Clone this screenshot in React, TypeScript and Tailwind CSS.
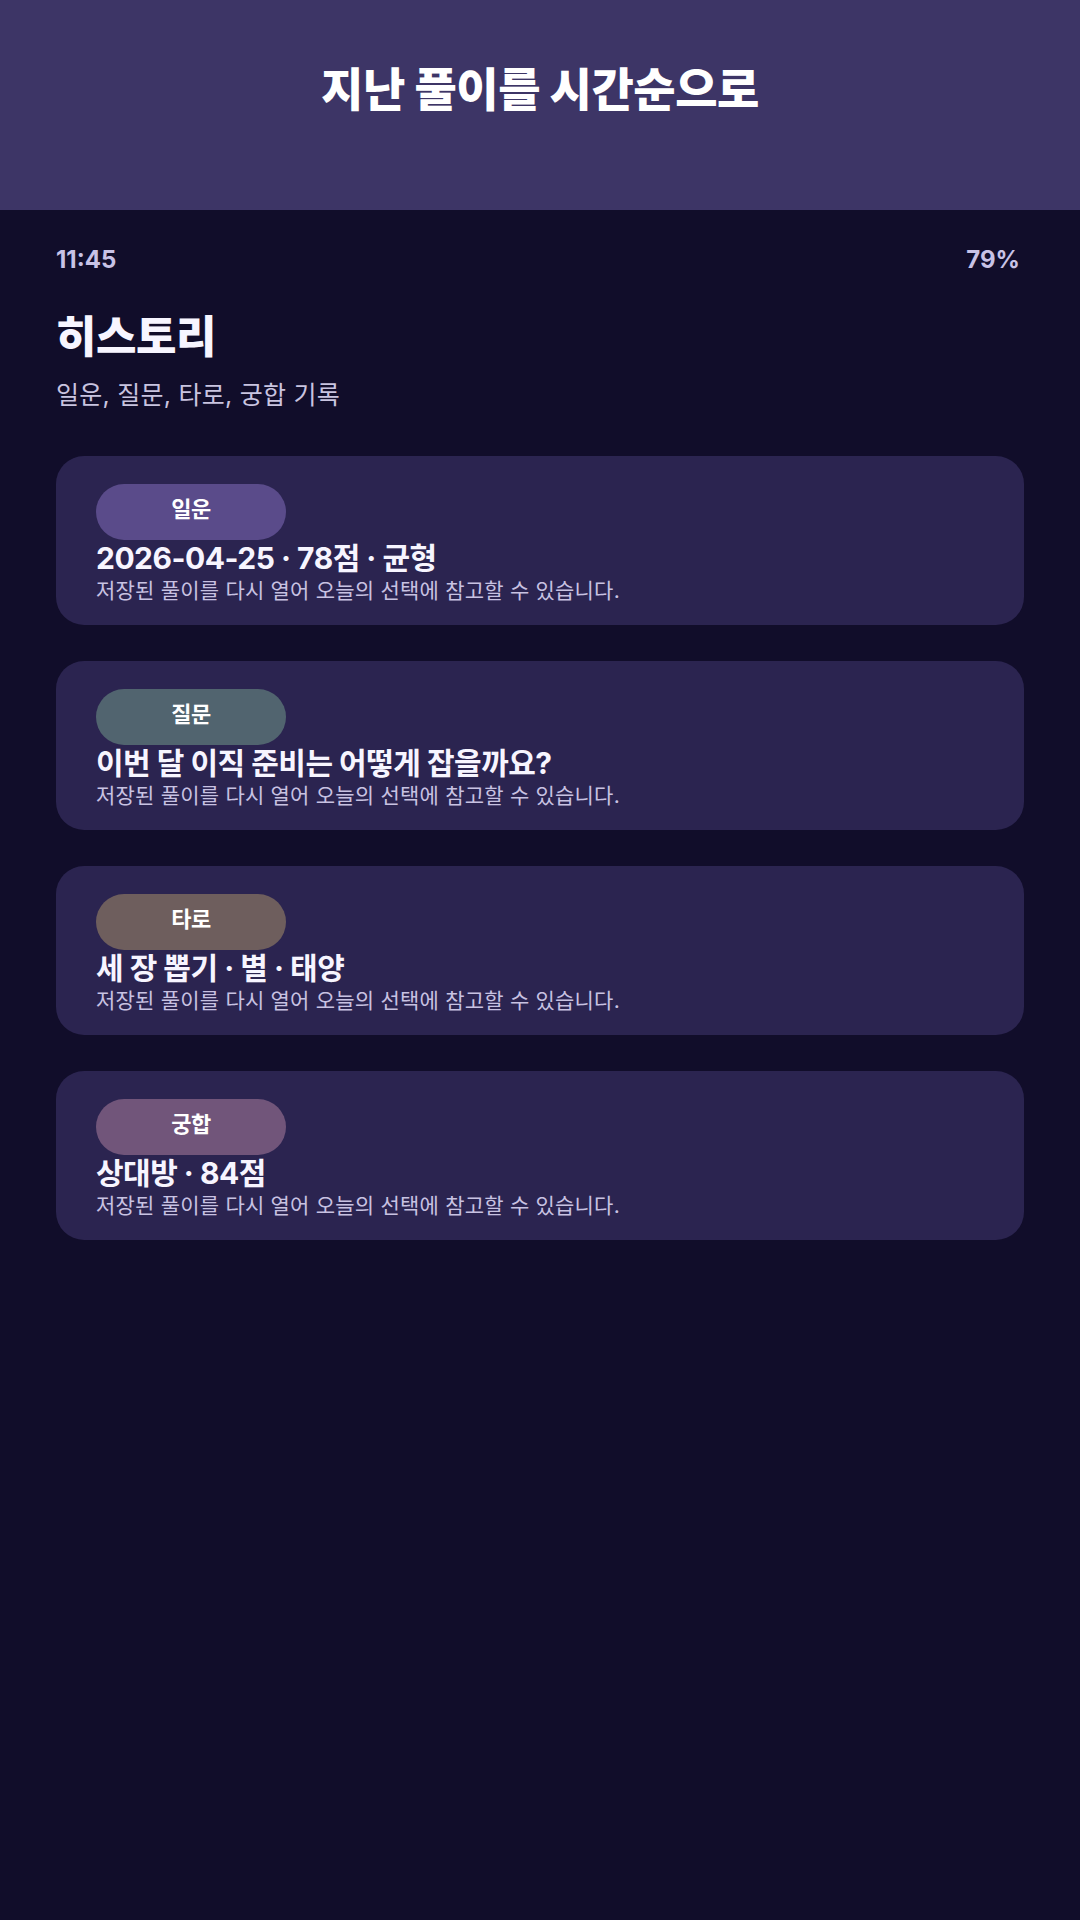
import React from 'react'

const font = { fontFamily: 'Inter, "Noto Sans CJK KR", "Noto Sans", sans-serif' }

interface Entry {
  tag: string
  title: string
  pill: string
}

const entries: Entry[] = [
  { tag: '일운', title: '2026-04-25 · 78점 · 균형', pill: 'bg-[#5a4b8a]' },
  { tag: '질문', title: '이번 달 이직 준비는 어떻게 잡을까요?', pill: 'bg-[#51646f]' },
  { tag: '타로', title: '세 장 뽑기 · 별 · 태양', pill: 'bg-[#6e5e5d]' },
  { tag: '궁합', title: '상대방 · 84점', pill: 'bg-[#71557a]' },
]

const HistoryCard: React.FC<{ entry: Entry }> = ({ entry }) => {
  return (
    <div className="flex flex-col items-start rounded-[28px] bg-[#2b2450] px-[40px] pt-[28px] pb-[20px]">
      <span
        className={`flex h-[56px] w-[190px] items-center justify-center rounded-full pb-[6px] text-[22px] font-bold tracking-[-0.02em] text-white ${entry.pill}`}
      >
        {entry.tag}
      </span>
      <span className="text-[30px] leading-[36px] font-bold tracking-[-0.017em] text-[#f7f5ff]">
        {entry.title}
      </span>
      <span className="text-[21px] leading-[29px] tracking-[0.01em] text-[#c8c2e2]">
        저장된 풀이를 다시 열어 오늘의 선택에 참고할 수 있습니다.
      </span>
    </div>
  )
}

export default function App() {
  return (
    <div className="min-h-[1920px] w-[1080px] bg-[#110d2a]" style={font}>
      <header className="flex h-[210px] items-start justify-center bg-[#3d3566] pt-[60px]">
        <h1 className="text-[46px] leading-[58px] font-extrabold tracking-[-0.01em] text-white">
          지난 풀이를 시간순으로
        </h1>
      </header>

      <main className="flex flex-col px-[56px]">
        <div className="flex items-center justify-between pt-[36px] pr-[4px] text-[24px] leading-[28px] font-bold text-[#c8c2e6]">
          <span>11:45</span>
          <span>79%</span>
        </div>

        <h2 className="mt-[37px] text-[44px] leading-[53px] font-extrabold tracking-[-0.01em] text-[#f7f5ff]">
          히스토리
        </h2>
        <p className="mt-[14px] text-[25px] leading-[34px] tracking-[0.01em] text-[#c9c4e0]">
          일운, 질문, 타로, 궁합 기록
        </p>

        <div className="mt-[44px] flex flex-col gap-[36px]">
          {entries.map((entry) => (
            <HistoryCard key={entry.tag} entry={entry} />
          ))}
        </div>
      </main>
    </div>
  )
}
